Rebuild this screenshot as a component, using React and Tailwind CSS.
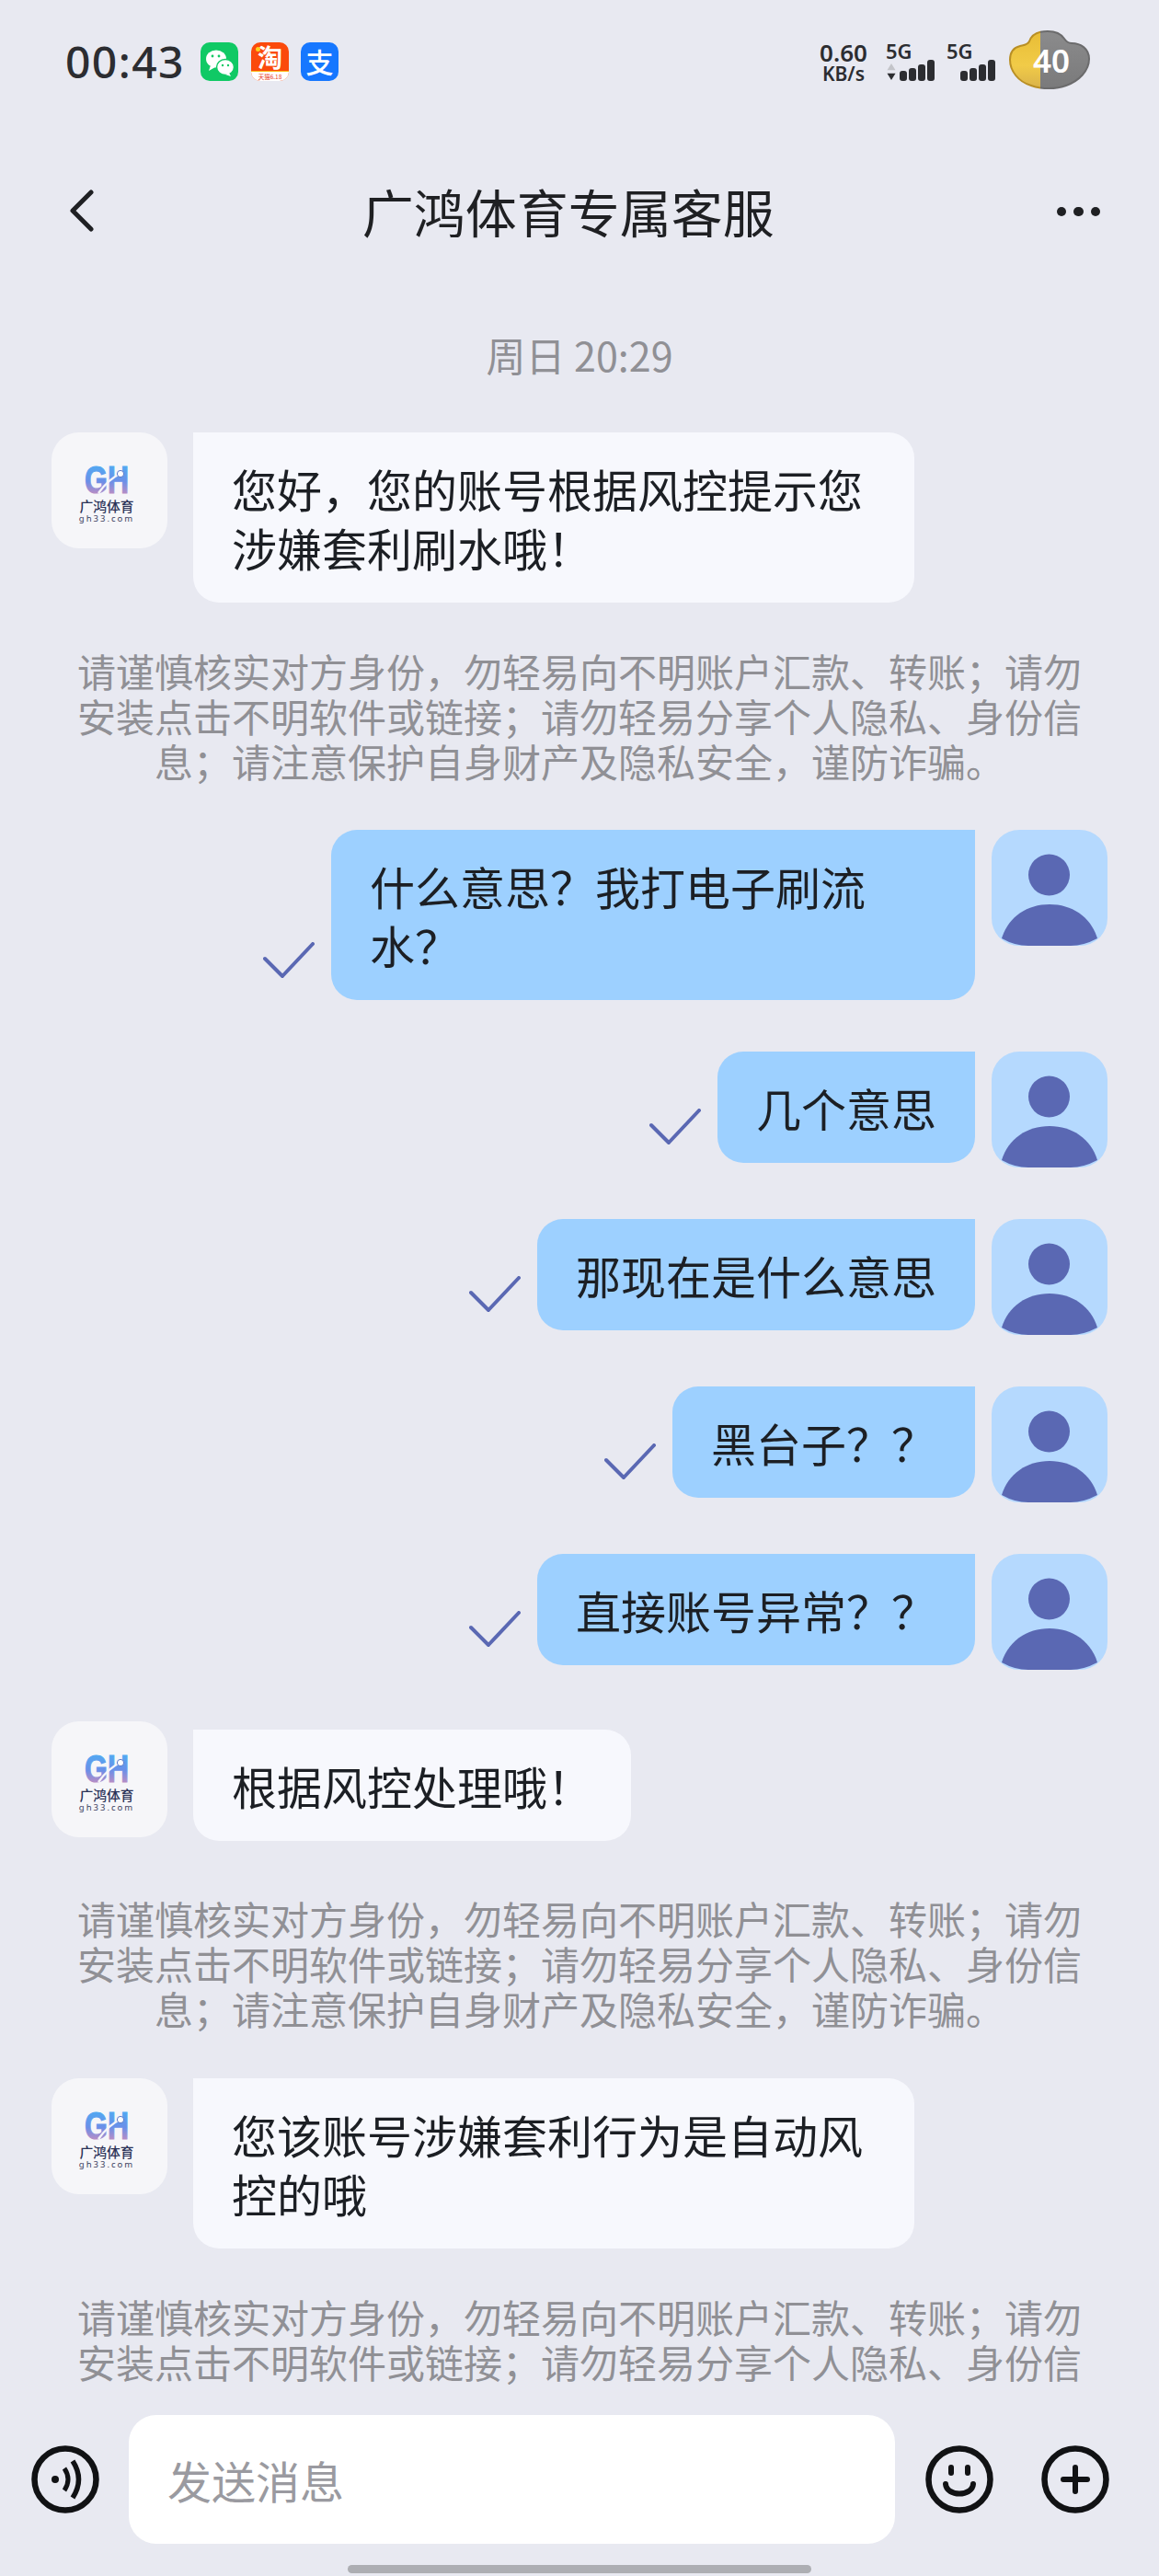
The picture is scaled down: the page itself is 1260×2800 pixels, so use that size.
import React from 'react';

function Person() {
  return (
    <div className="w-[126px] h-[126px] shrink-0 rounded-[30px] bg-[#b5d9fe] overflow-hidden">
      <svg viewBox="0 0 126 126" className="w-[126px] h-[126px] block">
        <circle cx="62.5" cy="49" r="22.5" fill="#5a68b3" />
        <path d="M11 118C18 95 38 81 63 81C88 81 108 95 115 118Q100 126 86 126H40Q25 126 11 118Z" fill="#5a68b3" />
      </svg>
    </div>
  );
}

function Logo() {
  return (
    <div className="w-[126px] h-[126px] shrink-0 rounded-[30px] bg-[#f6f6f9] flex flex-col items-center pt-[35px] pr-[6px]">
      <svg viewBox="0 0 50 32" className="w-[50px] h-[32px] block">
        <defs>
          <linearGradient id="ghg" x1="0" y1="0" x2="0" y2="1">
            <stop offset="0" stopColor="#45b6f7" />
            <stop offset="0.55" stopColor="#6b8fe8" />
            <stop offset="1" stopColor="#e58bb0" />
          </linearGradient>
        </defs>
        <text x="1" y="30.5" fontSize="42" fontWeight="700" fill="url(#ghg)" stroke="url(#ghg)" strokeWidth="1.2" textLength="48" lengthAdjust="spacingAndGlyphs" fontFamily="Liberation Sans, sans-serif">GH</text>
        <path d="M16 31C23 21 31 14 41 9" stroke="#f6f6f9" strokeWidth="2.4" fill="none" />
        <circle cx="40" cy="10" r="3.6" fill="#fff" stroke="#5a78c8" strokeWidth="1" />
      </svg>
      <div className="text-[14.8px] leading-[16px] mt-[5px] font-medium text-[#2c3358] whitespace-nowrap">广鸿体育</div>
      <div className="text-[9.5px] leading-[10px] mt-[1px] tracking-[2px] text-[#3b4160] whitespace-nowrap font-['Noto_Sans',sans-serif]">gh33.com</div>
    </div>
  );
}

function Check({ first }) {
  return (
    <svg viewBox="0 0 56 40" className={first ? 'w-[56px] h-[40px] mr-[18px] mb-[23px] shrink-0' : 'w-[56px] h-[40px] mr-[18px] mb-[19px] shrink-0'}>
      <path d="M2 18L21 37L54 2" fill="none" stroke="#5a68b3" strokeWidth="4" strokeLinecap="round" strokeLinejoin="round" />
    </svg>
  );
}

function Sent({ children, first, className }) {
  return (
    <div className="flex justify-end items-start mb-[56px]">
      <div className="flex items-end">
        <Check first={first} />
        <div className={'bg-[#9dd0ff] rounded-[28px] rounded-tr-none pt-[29px] pb-[28px] px-[42px] text-[49px] leading-[64px] text-[#1c1f24] whitespace-nowrap ' + (className || '')}>{children}</div>
      </div>
      <div className="w-[18px] shrink-0" />
      <Person />
    </div>
  );
}

function Received({ children, offset, className }) {
  return (
    <div className="flex items-start">
      <Logo />
      <div className={'ml-[28px] bg-[#f7f8fd] rounded-[28px] rounded-tl-none pt-[29px] pb-[28px] px-[42px] text-[49px] leading-[64px] text-[#1c1f24] whitespace-nowrap ' + (offset ? 'mt-[9px] ' : '') + (className || '')}>{children}</div>
    </div>
  );
}

function Notice({ top, bottom }) {
  const cls = 'text-center text-[42px] leading-[49px] text-[#909095] whitespace-nowrap ' + top + ' ' + bottom;
  return (
    <div className={cls}>
      请谨慎核实对方身份，勿轻易向不明账户汇款、转账；请勿<br />
      安装点击不明软件或链接；请勿轻易分享个人隐私、身份信<br />
      息；请注意保护自身财产及隐私安全，谨防诈骗。
    </div>
  );
}

function Signal({ arrows }) {
  const hs = [11, 14, 18, 23];
  return (
    <div className="flex flex-col items-start w-[56px]">
      <div className="text-[22px] leading-[17px] font-semibold text-[#2c2d31] font-['Noto_Sans',sans-serif]">5G</div>
      <div className={arrows ? 'flex items-end gap-[2px] mt-[1px]' : 'flex items-end gap-[2px] mt-[1px] ml-[15px]'}>
        {arrows && (
          <svg viewBox="0 0 12 22" className="w-[12px] h-[20px] mr-[1px]">
            <path d="M6 1L11 9H1Z" fill="#c3c4c9" />
            <path d="M6 21L11 13H1Z" fill="#2c2d31" />
          </svg>
        )}
        {hs.map((h, i) => (
          <div key={i} className="w-[8px] rounded-[3px] bg-[#2c2d31]" style={{ height: h }} />
        ))}
      </div>
    </div>
  );
}

function Cloud() {
  const d = 'M42 1C30 1 24 6 22 12C20 16 16 16 12 17C4 19 1 25 1 32C1 44 10 56 24 60C34 64 52 64 62 60C76 55 87 44 87 31C87 20 78 14 68 14C64 14 62 12 60 9C56 3 50 1 42 1Z';
  return (
    <div className="relative w-[88px] h-[64px] ml-[12px] shrink-0">
      <svg viewBox="0 0 88 64" className="w-[88px] h-[64px] block">
        <defs>
          <linearGradient id="cy" x1="0" y1="0" x2="0" y2="1">
            <stop offset="0" stopColor="#e8bd35" />
            <stop offset="0.6" stopColor="#f1cb48" />
            <stop offset="1" stopColor="#d9b24a" />
          </linearGradient>
          <linearGradient id="cg" x1="0" y1="0" x2="0" y2="1">
            <stop offset="0" stopColor="#8b8b8c" />
            <stop offset="1" stopColor="#7a7a7b" />
          </linearGradient>
          <clipPath id="cl"><rect x="0" y="0" width="34" height="64" /></clipPath>
          <clipPath id="cr"><rect x="34" y="0" width="54" height="64" /></clipPath>
        </defs>
        <path d={d} fill="url(#cy)" stroke="#b98f25" strokeWidth="2" clipPath="url(#cl)" />
        <path d={d} fill="url(#cg)" stroke="#6b6b6c" strokeWidth="2" clipPath="url(#cr)" />
      </svg>
      <div className="absolute left-[25px] top-[14px] w-[42px] text-center text-[35px] leading-[38px] font-semibold text-white font-['Noto_Sans',sans-serif]">40</div>
    </div>
  );
}

function StatusBar() {
  return (
    <div className="flex items-center justify-between h-[64px] mt-[33px] pl-[71px] pr-[75px]">
      <div className="flex items-center">
        <div className="text-[48px] leading-[64px] font-medium text-[#2c2d31] font-['Noto_Sans',sans-serif] mt-[4px] w-[147px] tracking-[1.4px]">00:43</div>
        <div className="w-[41px] h-[42px] rounded-[10px] bg-[#10c965] flex items-center justify-center mt-[3px]">
          <svg viewBox="0 0 41 42" className="w-[41px] h-[42px]">
            <ellipse cx="17" cy="18" rx="11" ry="9.5" fill="#fff" />
            <path d="M11 25L9 31L16 27Z" fill="#fff" />
            <ellipse cx="27" cy="27" rx="9.5" ry="8.5" fill="#fff" stroke="#10c965" strokeWidth="1.5" />
            <path d="M31 33L33 37L27 35Z" fill="#fff" />
            <circle cx="13" cy="15" r="1.4" fill="#10c965" />
            <circle cx="20" cy="15" r="1.4" fill="#10c965" />
            <circle cx="24" cy="25" r="1.2" fill="#10c965" />
            <circle cx="30" cy="25" r="1.2" fill="#10c965" />
          </svg>
        </div>
        <div className="w-[41px] h-[42px] rounded-[10px] overflow-hidden bg-[#fb4a0c] ml-[14px] mt-[3px] flex flex-col items-center">
          <div className="relative w-[41px] h-[31px] text-[27px] leading-[31px] font-bold text-center text-white">
            <div className="absolute left-[5px] top-[5px] w-[5px] h-[5px] rounded-full bg-[#ffd21f]" />
            淘
          </div>
          <div className="w-[41px] h-[11px] bg-white border-t border-[#fcb916] text-[6.5px] leading-[10px] text-center text-[#e8402c] whitespace-nowrap">天猫6.18</div>
        </div>
        <div className="w-[41px] h-[42px] rounded-[10px] bg-[#1677ff] ml-[13px] mt-[3px] text-[30px] leading-[41px] font-medium text-center text-white">支</div>
      </div>
      <div className="flex items-center">
        <div className="flex flex-col items-center w-[54px] mt-[4px] text-[#2c2d31] font-['Noto_Sans',sans-serif] font-semibold">
          <div className="text-[26px] leading-[25px]">0.60</div>
          <div className="text-[21px] leading-[20px]">KB/s</div>
        </div>
        <div className="ml-[19px] mt-[4px] mr-[10px]"><Signal arrows /></div>
        <div className="mt-[4px]"><Signal /></div>
        <Cloud />
      </div>
    </div>
  );
}

function NavBar() {
  return (
    <div className="flex items-center justify-between h-[80px] mt-[92px] pl-[74px] pr-[64px]">
      <svg viewBox="0 0 30 46" className="w-[30px] h-[46px]">
        <path d="M25 3L5 23L25 43" fill="none" stroke="#1f2023" strokeWidth="5" strokeLinecap="round" strokeLinejoin="round" />
      </svg>
      <div className="text-[56px] leading-[80px] text-[#1f2023] ml-[-17px]">广鸿体育专属客服</div>
      <div className="flex items-center gap-[8px] mt-[2px]">
        <div className="w-[10.5px] h-[10.5px] rounded-full bg-[#1f2023]" />
        <div className="w-[10.5px] h-[10.5px] rounded-full bg-[#1f2023]" />
        <div className="w-[10.5px] h-[10.5px] rounded-full bg-[#1f2023]" />
      </div>
    </div>
  );
}

function CircleIcon({ children }) {
  return (
    <svg viewBox="0 0 74 74" className="w-[74px] h-[74px] shrink-0">
      <circle cx="37" cy="37" r="33.5" fill="none" stroke="#111214" strokeWidth="6.5" />
      {children}
    </svg>
  );
}

export default function App() {
  return (
    <div className="w-[1260px] h-[2800px] bg-[#e8e9f1] flex flex-col overflow-hidden font-['Noto_Sans_CJK_SC','Noto_Sans',sans-serif]">
      <StatusBar />
      <NavBar />
      <div className="text-center text-[43px] leading-[56px] mt-[88px] text-[#909095]">周日 20:29</div>
      <div className="flex-1 min-h-0 overflow-hidden mt-[57px] mb-[31px] px-[56px]">
        <Received className="w-[784px]">
          您好，您的账号根据风控提示您<br />涉嫌套利刷水哦！
        </Received>
        <Notice top="mt-[49px]" bottom="mb-[51px]" />
        <Sent first className="w-[700px]">
          什么意思？我打电子刷流<br />水？
        </Sent>
        <Sent>几个意思</Sent>
        <Sent>那现在是什么意思</Sent>
        <Sent>黑台子？？</Sent>
        <Sent>直接账号异常？？</Sent>
        <Received offset>根据风控处理哦！</Received>
        <Notice top="mt-[59px]" bottom="mb-[52px]" />
        <Received className="w-[784px]">
          您该账号涉嫌套利行为是自动风<br />控的哦
        </Received>
        <Notice top="mt-[49px]" bottom="mb-0" />
      </div>
      <div className="flex items-center h-[140px] pl-[34px]">
        <CircleIcon>
          <circle cx="26" cy="37" r="4" fill="#111214" />
          <path d="M36 25Q44 37 36 49" fill="none" stroke="#111214" strokeWidth="5" />
          <path d="M45 17Q58 37 45 57" fill="none" stroke="#111214" strokeWidth="5.5" />
        </CircleIcon>
        <div className="w-[833px] h-[140px] ml-[32px] mr-[33px] rounded-[30px] bg-white flex items-center pl-[42px] text-[48px] text-[#9a9aa0]">发送消息</div>
        <CircleIcon>
          <path d="M28 24V30M46 24V30" fill="none" stroke="#111214" strokeWidth="6" strokeLinecap="round" />
          <path d="M22 42C23 56 51 56 52 42" fill="none" stroke="#111214" strokeWidth="6" strokeLinecap="round" />
        </CircleIcon>
        <div className="w-[52px] shrink-0" />
        <CircleIcon>
          <path d="M37 24V50M24 37H50" fill="none" stroke="#111214" strokeWidth="6" strokeLinecap="round" />
        </CircleIcon>
      </div>
      <div className="mt-[23px] mb-[3px] mx-auto w-[504px] h-[9px] rounded-full bg-[#adaeb3]" />
    </div>
  );
}
